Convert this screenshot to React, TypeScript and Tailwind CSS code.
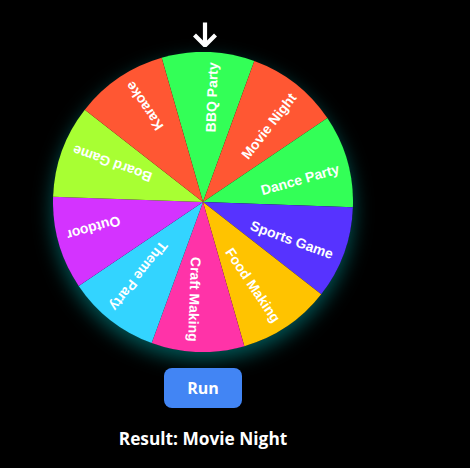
import React from "react";

const segments = [
  { label: "BBQ Party", color: "#33ff57" },
  { label: "Movie Night", color: "#ff5733" },
  { label: "Dance Party", color: "#33ff57" },
  { label: "Sports Game", color: "#5733ff" },
  { label: "Food Making", color: "#ffc300" },
  { label: "Craft Making", color: "#ff33a8" },
  { label: "Theme Party", color: "#33d4ff" },
  { label: "Outdoor", color: "#d433ff" },
  { label: "Board Game", color: "#a8ff33" },
  { label: "Karaoke", color: "#ff5733" },
];

const R = 150;
const C = 150;

function pt(angleDeg: number, r: number) {
  const a = (angleDeg * Math.PI) / 180;
  return [C + r * Math.cos(a), C + r * Math.sin(a)];
}

function Wheel() {
  return (
    <svg width={300} height={300} viewBox="0 0 300 300" className="block">
      {segments.map((s, i) => {
        const mid = -88 + 36 * i;
        const [x0, y0] = pt(mid - 18, R);
        const [x1, y1] = pt(mid + 18, R);
        return (
          <path
            key={"p" + i}
            d={`M ${C} ${C} L ${x0} ${y0} A ${R} ${R} 0 0 1 ${x1} ${y1} Z`}
            fill={s.color}
          />
        );
      })}
      {segments.map((s, i) => {
        const mid = -88 + 36 * i;
        return (
          <g key={"t" + i} transform={`rotate(${mid} ${C} ${C})`}>
            <text
              x={C + 140}
              y={C + 10}
              textAnchor="end"
              fill="#ffffff"
              fontFamily="'Liberation Sans', Arial, sans-serif"
              fontWeight="bold"
              fontSize={14}
            >
              {s.label}
            </text>
          </g>
        );
      })}
    </svg>
  );
}

export default function App() {
  return (
    <div className="min-h-[468px] w-[470px] bg-black">
      <div className="flex w-[406px] flex-col items-center pt-[22px]">
        <svg width={24} height={25} viewBox="0 0 24 25" className="ml-[3px] block">
          <line x1={12} y1={0.5} x2={12} y2={22} stroke="#fff" strokeWidth={4.2} />
          <polyline
            points="1.5,13 12,23.5 22.5,13"
            fill="none"
            stroke="#fff"
            strokeWidth={4.2}
            strokeLinejoin="miter"
          />
        </svg>
        <div className="mt-[5px] h-[300px] w-[300px] rounded-full shadow-[0_8px_20px_rgba(0,255,255,0.35)]">
          <Wheel />
        </div>
        <button className="mt-4 h-[40px] w-[78px] rounded-lg bg-[#4285f4] text-[16px] font-bold text-white [font-family:'Open_Sans',sans-serif]">
          Run
        </button>
        <div className="mt-[17px] text-[17.3px] font-bold leading-[27px] text-white [font-family:'Open_Sans',sans-serif]">
          Result: Movie Night
        </div>
      </div>
    </div>
  );
}
